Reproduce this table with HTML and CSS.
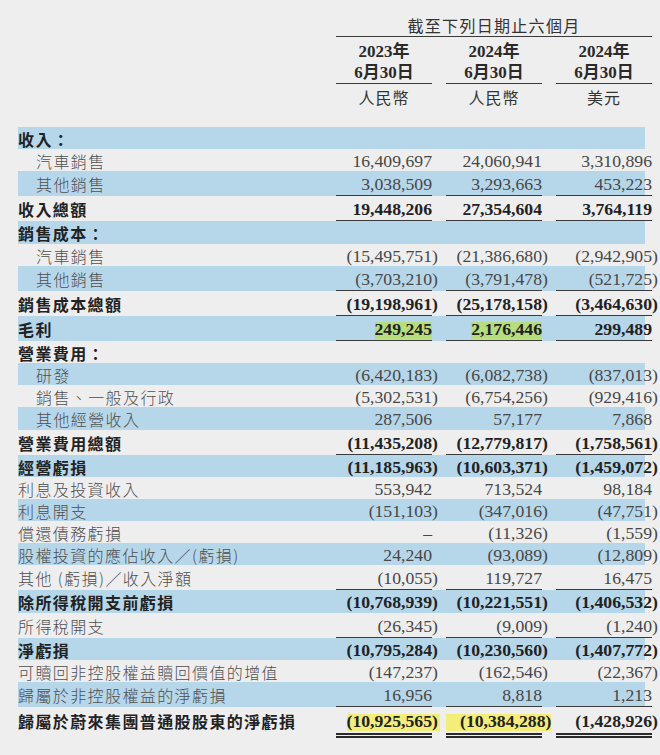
FILE: index.html
```html
<!DOCTYPE html>
<html lang="zh-Hant">
<head>
<meta charset="utf-8">
<title>截至下列日期止六個月</title>
<link rel="stylesheet" href="styles.css">
</head>
<body>
<div class="page">
  <div class="head cols">
    <div class="period">截至下列日期止六個月</div>
    <div class="date c1">2023年<br>6月30日</div>
    <div class="date c2">2024年<br>6月30日</div>
    <div class="date c3">2024年<br>6月30日</div>
    <div class="cur c1">人民幣</div>
    <div class="cur c2">人民幣</div>
    <div class="cur c3">美元</div>
  </div>

  <div class="table">
    <div class="row cols blue b"><div class="lab">收入：</div></div>
    <div class="row cols"><div class="lab ind">汽車銷售</div><div class="n">16,409,697</div><div class="n">24,060,941</div><div class="n">3,310,896</div></div>
    <div class="row cols blue u"><div class="lab ind">其他銷售</div><div class="n">3,038,509</div><div class="n">3,293,663</div><div class="n">453,223</div></div>
    <div class="row cols b u"><div class="lab">收入總額</div><div class="n">19,448,206</div><div class="n">27,354,604</div><div class="n">3,764,119</div></div>
    <div class="row cols blue b"><div class="lab">銷售成本：</div></div>
    <div class="row cols"><div class="lab ind">汽車銷售</div><div class="n"><span class="neg">(15,495,751)</span></div><div class="n"><span class="neg">(21,386,680)</span></div><div class="n"><span class="neg">(2,942,905)</span></div></div>
    <div class="row cols blue u"><div class="lab ind">其他銷售</div><div class="n"><span class="neg">(3,703,210)</span></div><div class="n"><span class="neg">(3,791,478)</span></div><div class="n"><span class="neg">(521,725)</span></div></div>
    <div class="row cols b u"><div class="lab">銷售成本總額</div><div class="n"><span class="neg">(19,198,961)</span></div><div class="n"><span class="neg">(25,178,158)</span></div><div class="n"><span class="neg">(3,464,630)</span></div></div>
    <div class="row cols blue b u"><div class="lab">毛利</div><div class="n"><span class="hg">249,245</span></div><div class="n"><span class="hg">2,176,446</span></div><div class="n">299,489</div></div>
    <div class="row cols b"><div class="lab">營業費用：</div></div>
    <div class="row cols blue"><div class="lab ind">研發</div><div class="n"><span class="neg">(6,420,183)</span></div><div class="n"><span class="neg">(6,082,738)</span></div><div class="n"><span class="neg">(837,013)</span></div></div>
    <div class="row cols"><div class="lab ind">銷售、一般及行政</div><div class="n"><span class="neg">(5,302,531)</span></div><div class="n"><span class="neg">(6,754,256)</span></div><div class="n"><span class="neg">(929,416)</span></div></div>
    <div class="row cols blue"><div class="lab ind">其他經營收入</div><div class="n">287,506</div><div class="n">57,177</div><div class="n">7,868</div></div>
    <div class="row cols b u"><div class="lab">營業費用總額</div><div class="n"><span class="neg">(11,435,208)</span></div><div class="n"><span class="neg">(12,779,817)</span></div><div class="n"><span class="neg">(1,758,561)</span></div></div>
    <div class="row cols blue b"><div class="lab">經營虧損</div><div class="n"><span class="neg">(11,185,963)</span></div><div class="n"><span class="neg">(10,603,371)</span></div><div class="n"><span class="neg">(1,459,072)</span></div></div>
    <div class="row cols"><div class="lab">利息及投資收入</div><div class="n">553,942</div><div class="n">713,524</div><div class="n">98,184</div></div>
    <div class="row cols blue"><div class="lab">利息開支</div><div class="n"><span class="neg">(151,103)</span></div><div class="n"><span class="neg">(347,016)</span></div><div class="n"><span class="neg">(47,751)</span></div></div>
    <div class="row cols"><div class="lab">償還債務虧損</div><div class="n">–</div><div class="n"><span class="neg">(11,326)</span></div><div class="n"><span class="neg">(1,559)</span></div></div>
    <div class="row cols blue"><div class="lab">股權投資的應佔收入／(虧損)</div><div class="n">24,240</div><div class="n"><span class="neg">(93,089)</span></div><div class="n"><span class="neg">(12,809)</span></div></div>
    <div class="row cols u"><div class="lab">其他 (虧損)／收入淨額</div><div class="n"><span class="neg">(10,055)</span></div><div class="n">119,727</div><div class="n">16,475</div></div>
    <div class="row cols blue b"><div class="lab">除所得稅開支前虧損</div><div class="n"><span class="neg">(10,768,939)</span></div><div class="n"><span class="neg">(10,221,551)</span></div><div class="n"><span class="neg">(1,406,532)</span></div></div>
    <div class="row cols u"><div class="lab">所得稅開支</div><div class="n"><span class="neg">(26,345)</span></div><div class="n"><span class="neg">(9,009)</span></div><div class="n"><span class="neg">(1,240)</span></div></div>
    <div class="row cols blue b"><div class="lab">淨虧損</div><div class="n"><span class="neg">(10,795,284)</span></div><div class="n"><span class="neg">(10,230,560)</span></div><div class="n"><span class="neg">(1,407,772)</span></div></div>
    <div class="row cols"><div class="lab">可贖回非控股權益贖回價值的增值</div><div class="n"><span class="neg">(147,237)</span></div><div class="n"><span class="neg">(162,546)</span></div><div class="n"><span class="neg">(22,367)</span></div></div>
    <div class="row cols blue u"><div class="lab">歸屬於非控股權益的淨虧損</div><div class="n">16,956</div><div class="n">8,818</div><div class="n">1,213</div></div>
    <div class="row cols b dbl"><div class="lab">歸屬於蔚來集團普通股股東的淨虧損</div><div class="n"><span class="neg hy1">(10,925,565)</span></div><div class="n"><span class="neg hy2">(10,384,288)</span></div><div class="n"><span class="neg">(1,428,926)</span></div></div>
  </div>
</div>
</body>
</html>
```

FILE: styles.css
```css
* { box-sizing: border-box; }
html, body { margin: 0; }
body {
  background: #eeeeee;
  width: 660px;
  height: 755px;
  overflow: hidden;
}
.page {
  padding: 14px 0 0 18px;
  width: 645px;
}
.cols {
  display: grid;
  grid-template-columns: 304px 96px 96px 96px;
  column-gap: 14px;
  padding-right: 7px;
}
.c1 { grid-column: 2; }
.c2 { grid-column: 3; }
.c3 { grid-column: 4; }

/* header */
.head {
  font-family: "Noto Sans CJK TC", sans-serif;
  color: #333333;
}
.period {
  grid-column: 2 / 5;
  grid-row: 1;
  text-align: center;
  font-size: 16px;
  line-height: 22px;
  letter-spacing: 1.3px;
  border-bottom: 1.5px solid #3a3a3a;
}
.date {
  grid-row: 2;
  text-align: center;
  padding-top: 4px;
  border-bottom: 1.5px solid #3a3a3a;
  font-family: "Liberation Serif", "Noto Sans CJK TC", serif;
  font-weight: 700;
  font-size: 17px;
  line-height: 21px;
  color: #2a2a2a;
}
.cur {
  grid-row: 3;
  text-align: center;
  padding-top: 2px;
  font-size: 16px;
  line-height: 22px;
  letter-spacing: 1px;
}

/* table */
.table { margin-top: 19px; }
.row { height: 22.2px; }
.row.u { height: 25px; }
.row.dbl { height: 31px; }
.blue { background: #b6d6ea; }

.lab {
  font-family: "Noto Sans CJK TC", sans-serif;
  font-size: 16px;
  line-height: 22px;
  letter-spacing: 1.4px;
  color: #4e4e4e;
  font-weight: 300;
  padding-top: 1px;
  white-space: nowrap;
}
.b .lab { font-weight: 700; color: #222222; }
.ind { padding-left: 18px; }

.n {
  font-family: "Liberation Serif", serif;
  font-size: 17.7px;
  line-height: 22px;
  text-align: right;
  color: #474747;
  padding-top: 1px;
  white-space: nowrap;
}
.b .n { font-weight: 700; color: #222222; }
.u .n { border-bottom: 1.5px solid #3a3a3a; padding-top: 2px; }
.u .lab { padding-top: 2px; }
.dbl .n {
  border-bottom: 5px double #2a2a2a;
  line-height: 24px;
  padding-top: 2px;
}
.dbl .lab { line-height: 24px; padding-top: 2px; }

.neg { margin-right: -0.333em; }

.hg { background: linear-gradient(transparent 3px, #b6de7c 3px); }
.hy1 {
  background: linear-gradient(transparent 3px, #f3ee78 3px);
  padding-right: 2px;
  margin-right: calc(-0.333em - 2px);
}
.hy2 {
  background: linear-gradient(transparent 3px, #f3ee78 3px);
  padding-left: 14px;
}
```
